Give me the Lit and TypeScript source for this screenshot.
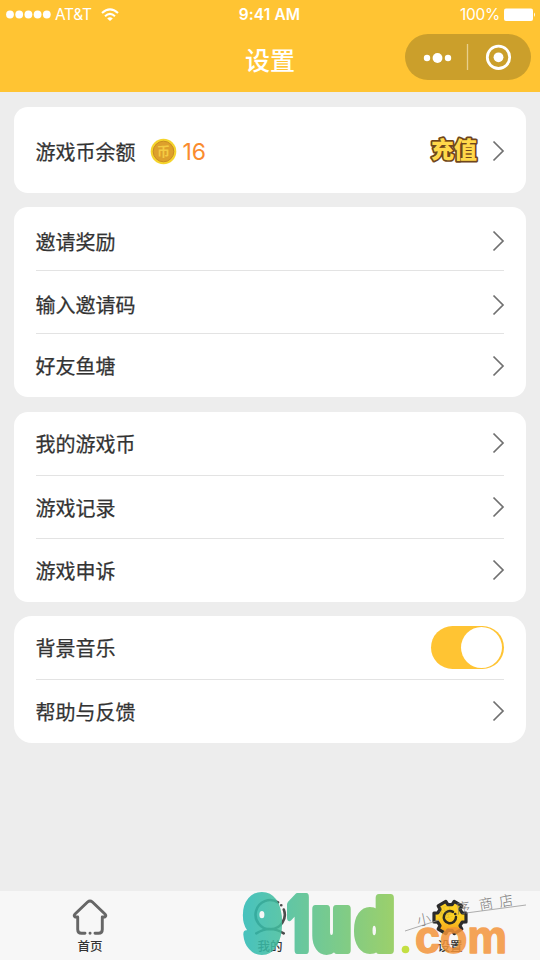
import { LitElement, html, css, svg } from "lit";
import { customElement } from "lit/decorators.js";

interface Row {
  label: string;
  toggle?: boolean;
}

const groups: { name: string; rows: Row[] }[] = [
  { name: "invite", rows: [{ label: "邀请奖励" }, { label: "输入邀请码" }, { label: "好友鱼塘" }] },
  { name: "game", rows: [{ label: "我的游戏币" }, { label: "游戏记录" }, { label: "游戏申诉" }] },
  { name: "misc", rows: [{ label: "背景音乐", toggle: true }, { label: "帮助与反馈" }] },
];

const gearPath = (cx: number, cy: number, outer: number, inner: number) => {
  const pts: string[] = [];
  for (let i = 0; i < 6; i++) {
    const a = (i * Math.PI) / 3;
    for (const [d, r] of [[-0.36, inner], [-0.27, outer], [0.27, outer], [0.36, inner]]) {
      pts.push(`${(cx + r * Math.cos(a + d)).toFixed(1)} ${(cy + r * Math.sin(a + d)).toFixed(1)}`);
    }
  }
  return `M${pts.join("L")}Z`;
};

@customElement("app-root")
export class AppRoot extends LitElement {
  static styles = css`
    :host {
      display: flex;
      flex-direction: column;
      position: relative;
      width: 540px;
      height: 960px;
      overflow: hidden;
      background: #ededed;
      color: #333;
      font-family: "Noto Sans CJK SC", sans-serif;
    }
    svg { display: block; flex: none; overflow: visible; }
    .header { height: 92px; background: #ffc433; color: #fff; flex: none; }
    .status {
      height: 30px;
      display: grid;
      grid-template-columns: 1fr auto 1fr;
      align-items: center;
      padding: 0 4px 0 6px;
      font: 15.5px/30px Inter, sans-serif;
    }
    .left, .right { display: flex; align-items: center; }
    .right { justify-content: flex-end; gap: 4px; }
    .carrier { margin: 0 9px 0 4px; letter-spacing: -0.3px; }
    .time { font-weight: 600; font-size: 15.5px; letter-spacing: 0.1px; margin-right: 3px; }
    .percent { letter-spacing: -0.3px; font-size: 15.5px; }
    .bar {
      height: 62px;
      display: grid;
      grid-template-columns: 1fr auto 1fr;
      align-items: start;
      padding: 4px 9px 0;
    }
    .title { grid-column: 2; font-size: 25px; line-height: 50px; font-weight: 500; }
    .capsule {
      justify-self: end;
      width: 126px;
      height: 46px;
      border-radius: 23px;
      background: #cb9f2b;
    }
    .main { flex: 1; padding: 15px 14.5px 0 14px; display: flex; flex-direction: column; gap: 14.4px; }
    .card { background: #fff; border-radius: 14px; padding: 0 21.5px; box-sizing: border-box; }
    .balance {
      height: 86px;
      padding-top: 2px;
      display: flex;
      align-items: center;
      font-size: 20px;
      -webkit-text-stroke: 0.25px #333;
    }
    .label { font-size: 20px; flex: 1; -webkit-text-stroke: 0.25px #333; }
    .invite { height: 190px; }
    .game { height: 190px; }
    .misc { height: 126.5px; border-radius: 18px; }
    .coin { margin: 0 6px 0 14px; -webkit-text-stroke: 0; }
    .amount {
      font: 23px/30px Inter, sans-serif;
      letter-spacing: -0.2px;
      color: #fa8b2e;
      flex: 1;
      -webkit-text-stroke: 0;
      padding-top: 2px;
    }
    .recharge { margin-right: 13px; }
    .row { height: 63.2px; display: flex; align-items: center; box-sizing: border-box; }
    .row + .row { border-top: 1px solid #e3e3e3; }
    .invite .row { height: 63px; padding-top: 5px; }
    .invite .row:last-child { padding-top: 1px; }
    .toggle {
      width: 73.5px;
      height: 43px;
      padding: 1px 2px;
      box-sizing: border-box;
      border-radius: 22px;
      background: #ffc433;
      display: flex;
      justify-content: flex-end;
    }
    .knob { width: 41px; height: 41px; border-radius: 50%; background: #fff; }
    .tabs {
      height: 69px;
      flex: none;
      display: grid;
      grid-template-columns: repeat(3, 1fr);
      background: #f7f7f7;
    }
    .tab { display: flex; flex-direction: column; align-items: center; padding-top: 6px; }
    .tab span { font-size: 12.5px; line-height: 16px; font-weight: 500; margin-top: 1px; }
    .brand { position: absolute; left: 236px; top: 884px; }
    .black { font-family: Inter, sans-serif; font-weight: 900; }
    .latin { font-family: "Liberation Sans", sans-serif; font-weight: 700; }
    .cjk { font-family: "Noto Sans CJK SC", sans-serif; }
  `;

  private chevron() {
    return html`<svg class="chevron" width="12" height="22" viewBox="0 0 12 22" fill="none" stroke="#707070" stroke-width="1.7">
      <path d="M1.5 1.5 11 11 1.5 20.5" />
    </svg>`;
  }

  private header() {
    return html`<div class="header">
      <div class="status">
        <div class="left">
          <svg width="45" height="10" viewBox="0 0 45 10" fill="#fff">
            ${[4, 13.2, 22.4, 31.6, 40.8].map((x) => svg`<circle cx=${x} cy="4.5" r="3.9" />`)}
          </svg>
          <span class="carrier">AT&amp;T</span>
          <svg width="18" height="14" viewBox="0 0 18 14" fill="none" stroke="#fff" stroke-width="2.1">
            <path d="M1 5Q9-2.2 17 5M4 8.2Q9 3.7 14 8.2" />
            <path d="M6.2 10.4Q9 8 11.8 10.4L9 13Z" fill="#fff" stroke="none" />
          </svg>
        </div>
        <span class="time">9:41 AM</span>
        <div class="right">
          <span class="percent">100%</span>
          <svg width="32" height="14" viewBox="0 0 32 14" fill="#fff">
            <rect x="0" y="0.5" width="29" height="12.5" rx="2" />
            <path d="M30 4.5q2 2.2 0 4.4z" />
          </svg>
        </div>
      </div>
      <div class="bar">
        <span class="title">设置</span>
        <svg class="capsule" viewBox="0 0 126 46" fill="#fff">
          <circle cx="22" cy="24" r="3.2" />
          <circle cx="32.5" cy="24" r="4.9" />
          <circle cx="43" cy="24" r="3.2" />
          <path d="M62.5 10v26" stroke="#e8cf8b" stroke-width="1.3" />
          <circle cx="93.5" cy="23.3" r="11.2" fill="none" stroke="#fff" stroke-width="2.8" />
          <circle cx="93.5" cy="23.3" r="4.9" />
        </svg>
      </div>
    </div>`;
  }

  private balance() {
    return html`<div class="card balance">
      <span>游戏币余额</span>
      <svg class="coin" width="27" height="27" viewBox="0 0 27 27">
        <circle cx="13.5" cy="13.5" r="12.8" fill="#f5d42c" />
        <circle cx="13.5" cy="13.5" r="10.3" fill="#dda02c" stroke="#c98b22" />
        <text class="cjk" x="13.5" y="18.4" font-size="13" font-weight="700" text-anchor="middle" fill="#f4cb42">币</text>
      </svg>
      <span class="amount">16</span>
      <svg class="recharge" width="50" height="32" viewBox="0 0 50 32">
        <text class="cjk" x="2" y="23" font-size="23" font-weight="900" textLength="46" stroke="#6f461c"
          stroke-width="3.4" stroke-linejoin="round" fill="#ffd84a" paint-order="stroke">充值</text>
      </svg>
      ${this.chevron()}
    </div>`;
  }

  private tabs() {
    return html`<div class="tabs">
      <div class="tab">
        <svg width="40" height="40" viewBox="0 0 40 40" fill="none" stroke="#666" stroke-width="2.9" stroke-linejoin="round" stroke-linecap="round">
          <path d="M15 36.3H11.5Q7.7 36.3 7.7 32.5V20H5.2Q3.4 19 4.8 17.3L17.6 5Q20 2.9 22.4 5L35.2 17.3Q36.6 19 34.8 20H32.3V32.5Q32.3 36.3 28.5 36.3H25M20 36.3h.1" />
        </svg>
        <span>首页</span>
      </div>
      <div class="tab">
        <svg width="40" height="40" viewBox="0 0 40 40" fill="none" stroke="#4c4c4c" stroke-width="2.6" stroke-linecap="round">
          <path d="M28 5.4A14.6 14.6 0 1 0 33.8 12.5M31.2 8.2h.1M6.3 36.4Q20 27.5 33.7 36.4" />
        </svg>
        <span>我的</span>
      </div>
      <div class="tab">
        <svg width="40" height="40" viewBox="0 0 40 40">
          <defs>
            <linearGradient id="gold" x1="0" y1="0" x2="0" y2="1">
              <stop offset="0.5" stop-color="#fdd021" />
              <stop offset="1" stop-color="#f59b1c" />
            </linearGradient>
          </defs>
          <path d=${gearPath(20, 20.5, 16.6, 13)} fill="url(#gold)" stroke="#2b2b2b" stroke-width="3.2" stroke-linejoin="round" />
          <path d="M23 14.9A6.1 6.1 0 1 0 26 20M25.2 17h.1" fill="none" stroke="#2f2b20" stroke-width="2.5" stroke-linecap="round" />
        </svg>
        <span>设置</span>
      </div>
    </div>`;
  }

  private brand() {
    const glyphs: [string, number, number, number, number][] = [
      ["9", 8, 66, 37, 73],
      ["1", 51.5, 66, 21, 73],
      ["u", 76.5, 66, 38, 75],
      ["d", 119.5, 66, 38, 71],
    ];
    return html`<svg class="brand" width="304" height="76" viewBox="0 0 304 76">
      <defs>
        <linearGradient id="sweep" gradientUnits="userSpaceOnUse" x1="7" y1="0" x2="157" y2="0">
          <stop offset="0" stop-color="#2bbab5" />
          <stop offset="1" stop-color="#8dca55" />
        </linearGradient>
      </defs>
      <g opacity="0.86" fill="url(#sweep)" stroke="url(#sweep)" stroke-width="8" stroke-linejoin="round">
        ${glyphs.map(
          ([ch, x, y, w, size]) => svg`<text class="black" x=${x} y=${y} font-size=${size} textLength=${w} lengthAdjust="spacingAndGlyphs">${ch}</text>`,
        )}
      </g>
      <circle cx="169.5" cy="65.5" r="3.8" fill="#c4df42" />
      <text class="latin" x="179" y="68.5" font-size="47" textLength="92" lengthAdjust="spacingAndGlyphs"
        fill="#f49439" stroke="#f49439" stroke-width="1.5" stroke-linejoin="round" opacity="0.84">com</text>
      <path d="M169 47 203 36M230 29 290 21" stroke="#999" stroke-width="0.8" />
      <g class="cjk" fill="#777" font-size="14" font-weight="300">
        <text x="182" y="42" transform="rotate(-12 182 42)">小</text>
        <text x="203" y="35" transform="rotate(-12 203 35)" opacity="0.25">程</text>
        <text x="221" y="30" transform="rotate(-10 221 30)">序</text>
        <text x="244" y="26" transform="rotate(-10 244 26)">商</text>
        <text x="264" y="23" transform="rotate(-10 264 23)">店</text>
      </g>
    </svg>`;
  }

  render() {
    return html`
      ${this.header()}
      <div class="main">
        ${this.balance()}
        ${groups.map(
          (g) => html`<div class="card ${g.name}">
            ${g.rows.map(
              (r) => html`<div class="row">
                <span class="label">${r.label}</span>
                ${r.toggle ? html`<div class="toggle"><div class="knob"></div></div>` : this.chevron()}
              </div>`,
            )}
          </div>`,
        )}
      </div>
      ${this.tabs()} ${this.brand()}
    `;
  }
}
